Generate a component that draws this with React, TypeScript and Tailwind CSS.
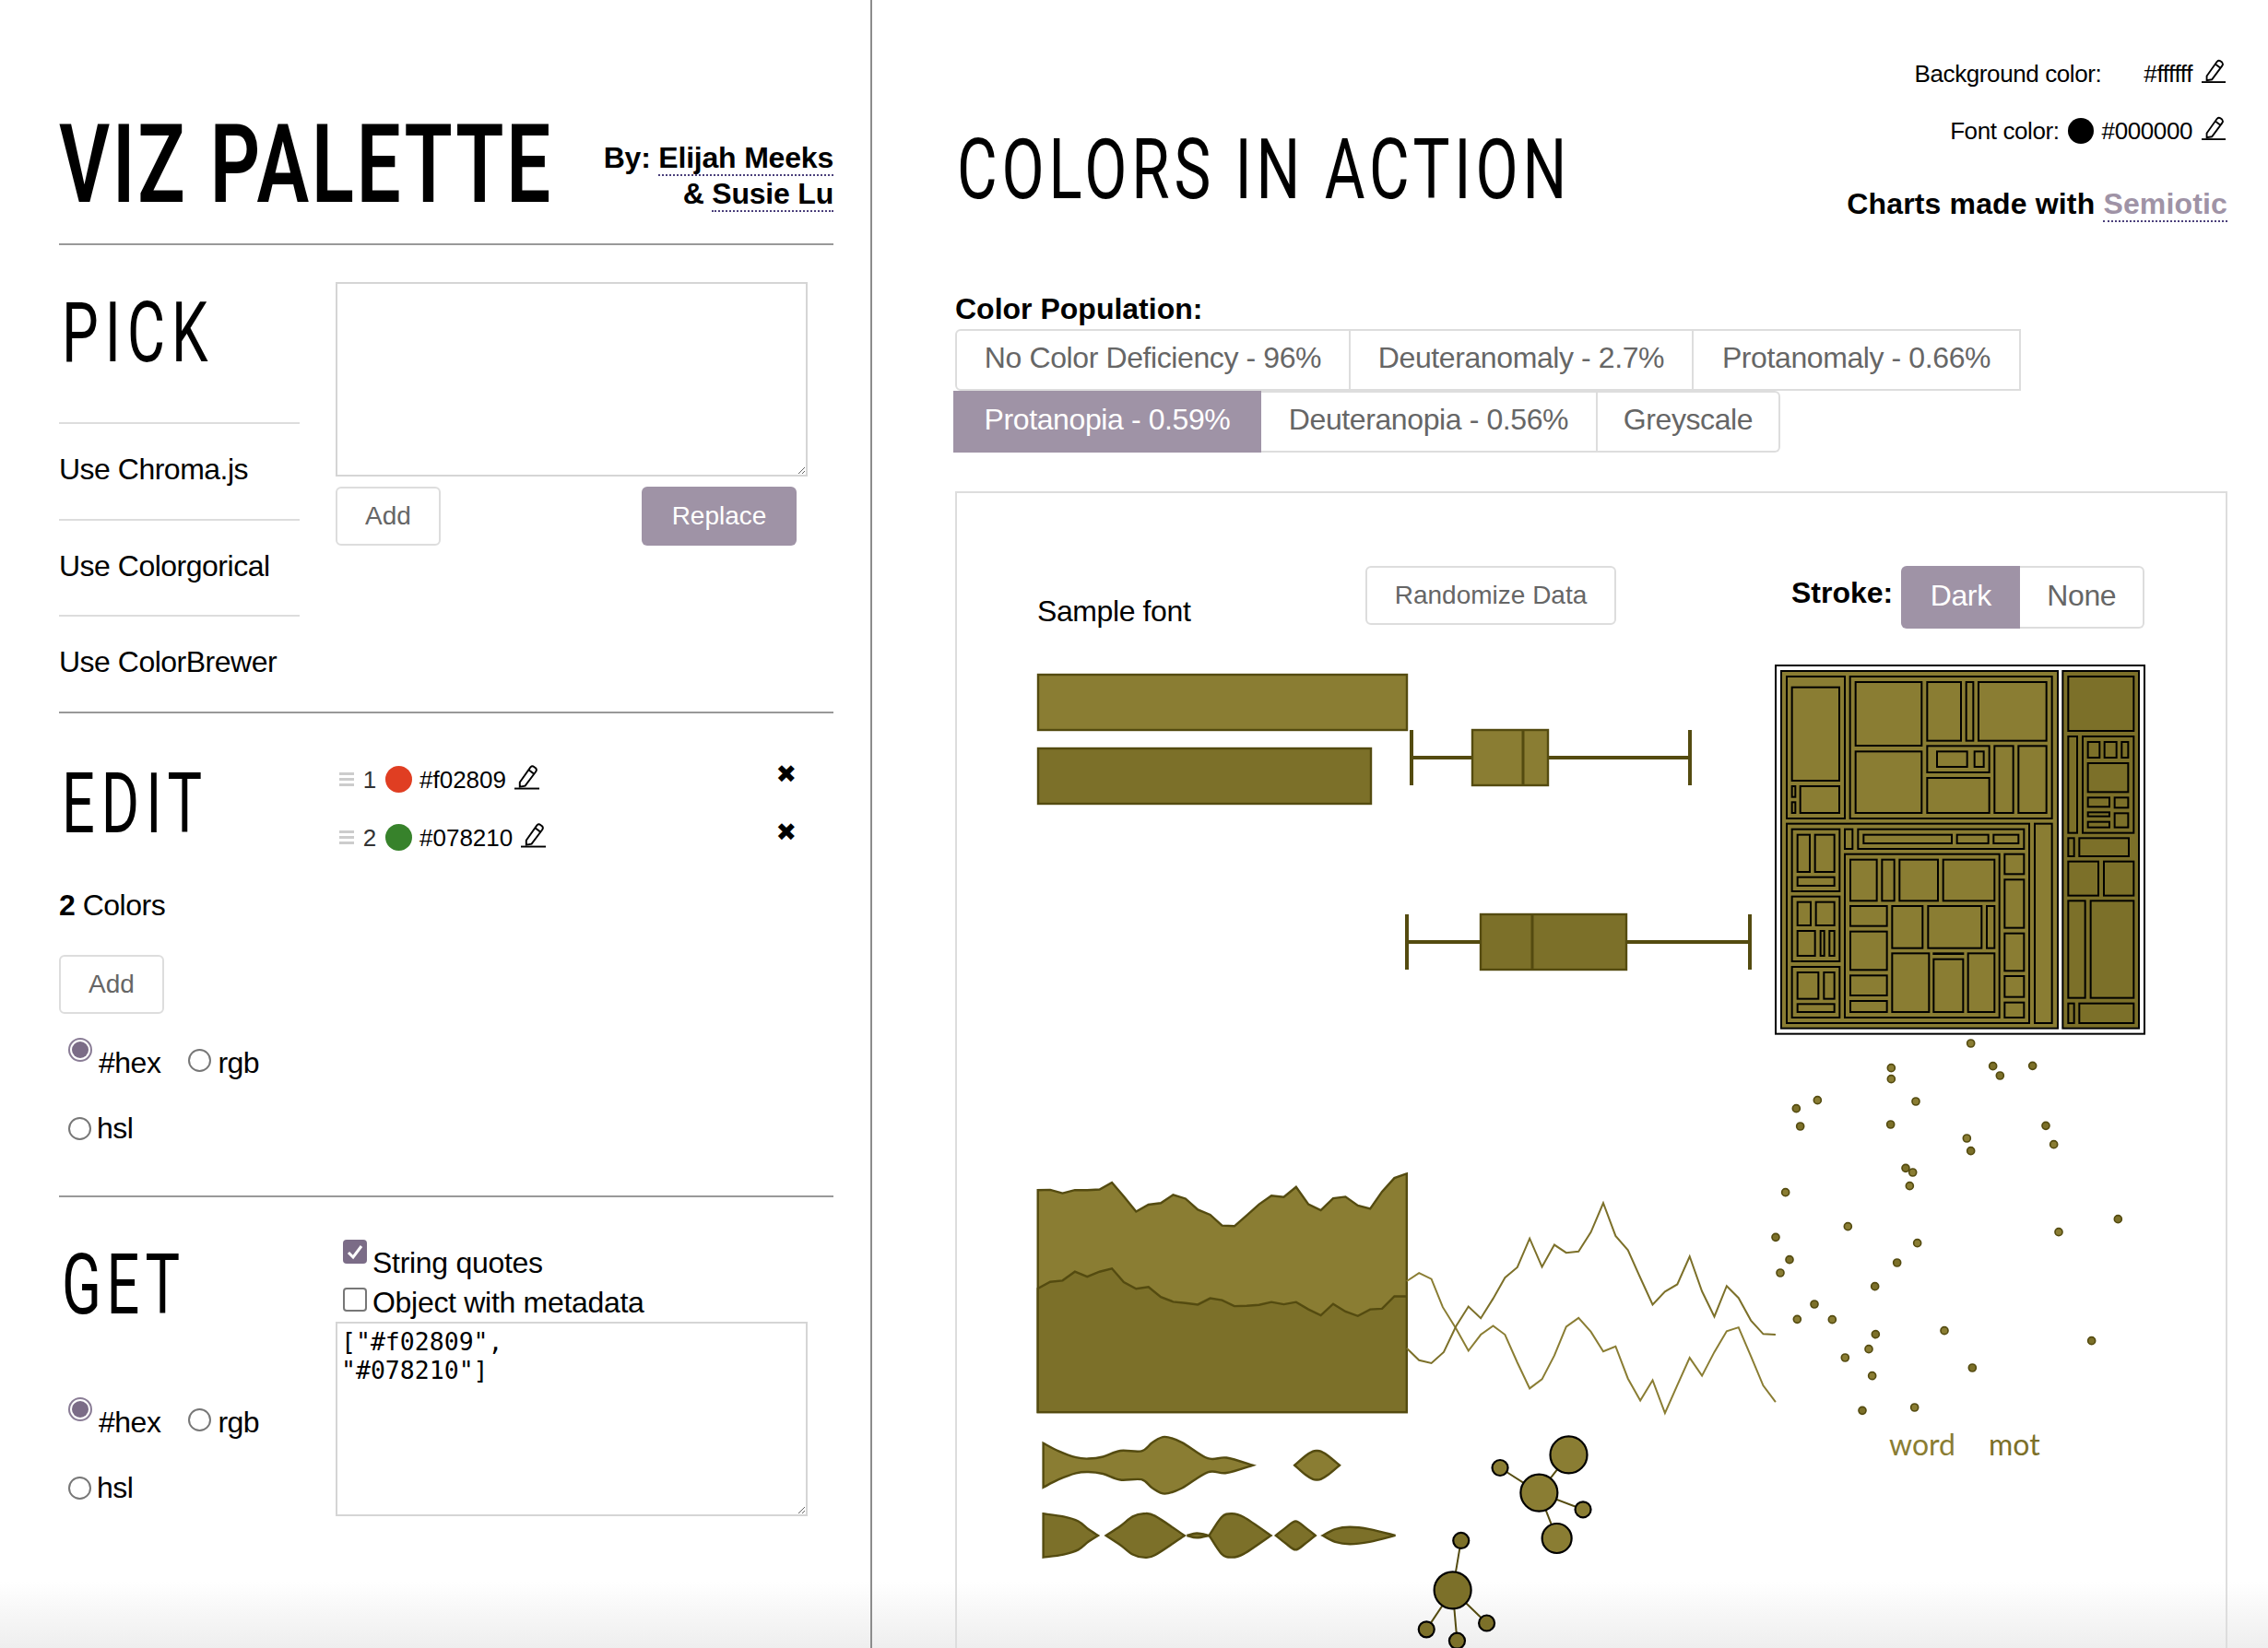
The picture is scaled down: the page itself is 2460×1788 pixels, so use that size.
const FILL1 = "#8a7d33";
const FILL2 = "#7c7029";
const DARK = "#544b10";

// treemap boxes, read off at 3x then scaled down by the group transform
const treeA = [
  [114, 102, 303, 564], [131, 137, 285, 441], [131, 459, 142, 494], [131, 511, 142, 546], [158, 459, 285, 546],
  [320, 102, 977, 564], [338, 120, 553, 327], [338, 346, 553, 546], [571, 120, 681, 311], [698, 120, 721, 311],
  [738, 120, 959, 311], [571, 328, 773, 414], [603, 346, 701, 396], [725, 346, 755, 396], [571, 432, 773, 546],
  [790, 328, 851, 546], [868, 328, 959, 546],
  [114, 581, 903, 1230], [131, 599, 286, 801], [149, 617, 189, 738], [206, 617, 269, 738], [149, 755, 269, 783],
  [131, 818, 286, 1029], [149, 836, 192, 912], [209, 836, 269, 912], [149, 930, 206, 1011], [224, 930, 236, 1011],
  [253, 930, 269, 1011], [131, 1047, 286, 1212], [149, 1065, 217, 1151], [235, 1065, 269, 1151], [149, 1168, 269, 1194],
  [303, 599, 328, 663], [346, 599, 886, 663], [364, 617, 651, 645], [668, 617, 770, 645], [787, 617, 868, 645],
  [303, 680, 806, 1212], [321, 698, 407, 832], [424, 698, 464, 832], [481, 698, 606, 832], [623, 698, 790, 832],
  [321, 849, 440, 914], [457, 849, 556, 986], [574, 849, 748, 986], [765, 849, 790, 986], [321, 932, 440, 1057],
  [321, 1075, 440, 1140], [321, 1158, 440, 1194], [457, 1003, 577, 1194], [592, 1003, 688, 1005], [592, 1022, 688, 1194],
  [704, 1003, 790, 1194], [823, 680, 886, 745], [823, 763, 886, 920], [823, 938, 886, 1060], [823, 1077, 886, 1145],
  [823, 1163, 886, 1212], [921, 581, 977, 1230],
];
const treeB = [
  [1030, 102, 1243, 279], [1030, 297, 1059, 611], [1077, 297, 1243, 611], [1094, 315, 1132, 366], [1148, 315, 1187, 366],
  [1204, 315, 1225, 366], [1094, 384, 1225, 478], [1094, 496, 1164, 526], [1181, 496, 1225, 529], [1094, 544, 1164, 557],
  [1094, 575, 1164, 593], [1181, 547, 1225, 593], [1030, 628, 1049, 687], [1066, 628, 1227, 687], [1030, 704, 1128, 815],
  [1146, 704, 1243, 815], [1030, 832, 1085, 1148], [1103, 832, 1243, 1148], [1030, 1166, 1049, 1230], [1066, 1166, 1243, 1230],
];

const dots: [number, number, number][] = [
  [713, 36, 1], [454, 116, 1], [454, 152, 1], [785, 110, 2], [808, 141, 2], [914, 109, 2], [214, 221, 1], [145, 248, 2],
  [158, 306, 2], [534, 225, 1], [452, 300, 2], [957, 304, 2], [983, 365, 1], [700, 345, 1], [713, 386, 2], [501, 442, 2],
  [524, 456, 1], [514, 500, 1], [110, 521, 1], [313, 632, 1], [78, 667, 2], [539, 686, 1], [473, 750, 2], [123, 740, 2],
  [93, 783, 1], [401, 827, 2], [204, 885, 2], [148, 934, 1], [262, 935, 1], [403, 983, 2], [381, 1031, 1], [304, 1059, 1],
  [392, 1118, 1], [360, 1231, 2], [530, 1221, 1], [627, 971, 1], [718, 1092, 2], [1106, 1004, 2], [999, 650, 1], [1192, 608, 2],
];

const areaTop = "48,120 73,119 98,130 123,120 148,120 173,118 198,96 222,140 247,188 272,166 297,161 322,135 347,147 372,182 397,198 421,232 446,234 471,200 496,165 521,138 546,142 571,110 596,165 621,184 646,146 671,141 696,169 721,179 745,125 770,82 795,68";
const areaLow = "48,431 73,410 98,406 123,378 148,394 173,378 198,368 222,411 247,432 272,426 297,458 322,473 347,477 372,482 397,462 421,468 446,487 471,486 496,483 521,474 546,481 571,474 596,497 621,516 646,480 671,504 696,518 721,497 745,495 770,456 795,456";
const lineA = "795,408 820,382 845,401 868,490 895,558 920,628 945,577 970,549 994,577 1019,665 1044,747 1069,718 1094,643 1118,552 1143,524 1168,568 1193,630 1218,614 1243,716 1268,785 1293,721 1318,825 1343,737 1368,650 1393,707 1418,632 1443,566 1467,554 1492,645 1517,738 1542,790";
const lineB = "795,620 820,658 845,667 870,632 895,550 920,488 945,525 970,463 994,397 1019,364 1044,273 1069,363 1094,293 1118,318 1143,314 1168,253 1193,161 1218,265 1243,310 1268,397 1293,482 1318,441 1343,418 1368,330 1393,440 1418,520 1443,423 1467,461 1492,532 1517,575 1542,577";

// one smooth edge through points, offset from the centre line by sign * height
function edge(points: [number, number][], cy: number, sign: number) {
  let d = "";
  const py = (i: number) => cy + sign * points[i][1];
  for (let i = 1; i < points.length; i++) {
    const a = Math.max(i - 2, 0);
    const b = Math.min(i + 1, points.length - 1);
    const c1x = points[i - 1][0] + (points[i][0] - points[a][0]) / 6;
    const c1y = py(i - 1) + (py(i) - py(a)) / 6;
    const c2x = points[i][0] - (points[b][0] - points[i - 1][0]) / 6;
    const c2y = py(i) - (py(b) - py(i - 1)) / 6;
    d += ` C${c1x},${c1y} ${c2x},${c2y} ${points[i][0]},${py(i)}`;
  }
  return d;
}

// mirrored violin outline around a centre line
function violin(points: [number, number][], cy: number) {
  const back = [...points].reverse();
  return `M${points[0][0]},${cy - points[0][1]}${edge(points, cy, -1)} L${back[0][0]},${cy + back[0][1]}${edge(back, cy, 1)} Z`;
}

const nx = (v: number) => 1100 + v / 1.867;
const ny = (v: number) => 1250 + v / 2.914;

function Network({ nodes, fill }: { nodes: [number, number, number][]; fill: string }) {
  const [hub, ...rest] = nodes;
  return (
    <g>
      {rest.map((n, i) => (
        <line key={i} x1={nx(hub[0])} y1={ny(hub[1])} x2={nx(n[0])} y2={ny(n[1])} stroke={DARK} strokeWidth={2} />
      ))}
      {nodes.map((n, i) => (
        <circle key={i} cx={nx(n[0])} cy={ny(n[1])} r={n[2]} fill={fill} stroke="#000" strokeWidth={2.2} />
      ))}
    </g>
  );
}

function Box({ x0, x1, b0, b1, med, y, fill }: { x0: number; x1: number; b0: number; b1: number; med: number; y: number; fill: string }) {
  return (
    <g stroke={DARK}>
      <line x1={x0} x2={x1} y1={y} y2={y} strokeWidth={4} />
      <line x1={x0} x2={x0} y1={y - 30} y2={y + 30} strokeWidth={4} />
      <line x1={x1} x2={x1} y1={y - 30} y2={y + 30} strokeWidth={4} />
      <rect x={b0} y={y - 30} width={b1 - b0} height={60} fill={fill} strokeWidth={2.4} />
      <line x1={med} x2={med} y1={y - 30} y2={y + 30} strokeWidth={3} />
    </g>
  );
}

const smallViolins: [number, number][][] = [
  [[59, 69], [100, 60], [130, 45], [150, 20], [170, 0]],
  [[186, 0], [215, 30], [240, 60], [262, 69], [285, 62], [345, 0]],
  [[350, 0], [370, 7], [395, 0]],
  [[395, 0], [420, 58], [440, 69], [465, 58], [520, 0]],
  [[530, 0], [550, 25], [570, 45], [590, 25], [610, 0]],
  [[625, 0], [650, 20], [680, 27], [720, 20], [772, 0]],
];

function Charts() {
  return (
    <svg width={1379} height={1255} className="absolute left-0 top-0">
      <g transform="translate(-1038,-535)">
        <rect x={1126} y={732} width={400} height={60} fill={FILL1} stroke={DARK} strokeWidth={2.4} />
        <rect x={1126} y={812} width={361} height={60} fill={FILL2} stroke={DARK} strokeWidth={2.4} />
        <Box x0={1531} x1={1833} b0={1597} b1={1679} med={1652} y={822} fill={FILL1} />
        <Box x0={1526} x1={1898} b0={1606} b1={1764} med={1662} y={1022} fill={FILL2} />

        {/* treemap */}
        <g transform="translate(1900,700) scale(0.33333)" strokeWidth={6}>
          <rect x={78} y={66} width={1200} height={1199} fill="#fff" stroke="#000" />
          <rect x={96} y={84} width={900} height={1163} fill={FILL1} stroke="#000" />
          {treeA.map(([a, b, c, d], i) => (
            <rect key={i} x={a} y={b} width={c - a} height={d - b} fill={FILL1} stroke="#000" />
          ))}
          <rect x={1012} y={84} width={248} height={1163} fill={FILL2} stroke="#000" />
          {treeB.map(([a, b, c, d], i) => (
            <rect key={i} x={a} y={b} width={c - a} height={d - b} fill={FILL2} stroke="#000" />
          ))}
        </g>

        {/* scatter */}
        <g transform="translate(1900,1120) scale(0.33333)">
          {dots.map(([x, y, s], i) => (
            <circle key={i} cx={x} cy={y} r={12} fill={s === 1 ? FILL1 : FILL2} stroke={DARK} strokeWidth={5} />
          ))}
        </g>

        {/* area, lines, violins */}
        <g transform="translate(1100,1250) scale(0.5356,0.3432)">
          <polygon points={`48,822 ${areaTop} 795,822`} fill={FILL1} stroke={DARK} strokeWidth={2.4} vectorEffect="non-scaling-stroke" />
          <polygon points={`48,822 ${areaLow} 795,822`} fill={FILL2} stroke={DARK} strokeWidth={2.4} vectorEffect="non-scaling-stroke" />
          <polyline points={lineA} fill="none" stroke={FILL1} strokeWidth={2} vectorEffect="non-scaling-stroke" />
          <polyline points={lineB} fill="none" stroke={FILL2} strokeWidth={2} vectorEffect="non-scaling-stroke" />
          <path
            d={violin(
              [[59, 70], [90, 45], [125, 25], [150, 21], [180, 27], [215, 46], [258, 45], [280, 72], [305, 90], [340, 72], [392, 22], [430, 24], [483, 0]],
              990,
            )}
            fill={FILL1}
            stroke={DARK}
            strokeWidth={2.4}
            vectorEffect="non-scaling-stroke"
          />
          <path
            d={violin([[568, 0], [590, 30], [605, 44], [613, 46], [621, 44], [636, 30], [659, 0]], 990)}
            fill={FILL1}
            stroke={DARK}
            strokeWidth={2.4}
            vectorEffect="non-scaling-stroke"
          />
          {smallViolins.map((p, i) => (
            <path key={i} d={violin(p, 1212)} fill={FILL2} stroke={DARK} strokeWidth={2.4} vectorEffect="non-scaling-stroke" />
          ))}
        </g>

        <Network nodes={[[1063, 1077, 20], [1123, 957, 20], [1099, 1221, 16], [984, 998, 8.5], [1152, 1130, 8.5]]} fill={FILL1} />
        <Network nodes={[[888, 1385, 20], [905, 1228, 8.5], [835, 1509, 8.5], [897, 1545, 8.5], [957, 1489, 8.5]]} fill={FILL2} />

        <text x={2049} y={1579} fontSize={32} fontWeight={400} fontFamily="Lato, sans-serif" fill={FILL1}>word</text>
        <text x={2157} y={1579} fontSize={32} fontWeight={400} fontFamily="Lato, sans-serif" fill={FILL2}>mot</text>
      </g>
    </svg>
  );
}

function Pencil({ className }: { className?: string }) {
  return (
    <svg viewBox="0 0 28 28" className={className} fill="none" stroke="#000" strokeWidth={2}>
      <path d="M6 20 L18 3 Q20 1 22 2.5 L24 4 Q25.500 6 24 8 L12 24 L6 25 Z" />
      <path d="M16 6 L22 10.500" />
      <path d="M0 27 H28" />
    </svg>
  );
}

function Handle() {
  return (
    <span className="flex w-[16px] flex-col gap-[3px]">
      <span className="h-[3px] bg-[#ccc]" />
      <span className="h-[3px] bg-[#ccc]" />
      <span className="h-[3px] bg-[#ccc]" />
    </span>
  );
}

function Radio({ on }: { on?: boolean }) {
  if (on) {
    return (
      <span className="flex h-[26px] w-[26px] shrink-0 items-center justify-center rounded-full border-2 border-[#8a7d96] bg-white">
        <span className="h-[18px] w-[18px] rounded-full bg-[#7b6c87]" />
      </span>
    );
  }
  return <span className="block h-[25px] w-[25px] shrink-0 rounded-full border-2 border-[#777] bg-white" />;
}

function FormatRadios() {
  return (
    <div className="w-[260px] text-[32px] leading-none tracking-[-0.5px]">
      <div className="flex h-[50px] items-start pl-[10px]">
        <Radio on />
        <span className="ml-[7px] mt-[11px]">#hex</span>
        <span className="ml-[30px] mt-[12px] block"><Radio /></span>
        <span className="ml-[7px] mt-[11px]">rgb</span>
      </div>
      <div className="mt-[35px] flex h-[26px] items-center pl-[10px]">
        <Radio />
        <span className="ml-[6px]">hsl</span>
      </div>
    </div>
  );
}

function Heading({ children, scale }: { children: string; scale: string }) {
  return (
    <h2
      className={`mt-[4px] h-[64px] origin-left whitespace-nowrap font-['Roboto',sans-serif] text-[90px] font-normal leading-[64px] ${scale}`}
    >
      {children}
    </h2>
  );
}

const outlineBtn = "rounded-[6px] border-2 border-[#ddd] text-[#666] text-[28px]";

function ColorRow({ n, color, hex }: { n: number; color: string; hex: string }) {
  return (
    <div className="flex h-[63px] items-center text-[26px] leading-none">
      <span className="ml-[4px]"><Handle /></span>
      <span className="ml-[8px] w-[18px] text-center text-[#333]">{n}</span>
      <span className="ml-[8px] h-[29px] w-[29px] rounded-full" style={{ backgroundColor: color }} />
      <span className="ml-[8px]">{hex}</span>
      <Pencil className="ml-[9px] h-[28px] w-[27px] -translate-y-[3px]" />
      <span className="ml-auto mr-[12px] -translate-y-[6px] font-['DejaVu_Sans',sans-serif] text-[27px] leading-none">✖</span>
    </div>
  );
}

function SegButton({ label, width, active, rounded }: { label: string; width: string; active?: boolean; rounded?: string }) {
  return (
    <span
      className={`flex items-center justify-center whitespace-nowrap pb-[6px] ${width} ${rounded ?? ""} ${
        active ? "bg-[#9f93a6] text-white" : "border-y-2 border-r-2 border-[#ddd] text-[#666]"
      }`}
    >
      {label}
    </span>
  );
}

export default function App() {
  return (
    <div className="relative flex h-[1788px] w-[2460px] overflow-hidden bg-white font-['Liberation_Sans',sans-serif] text-black">
      {/* Bottom fade behind the page */}
      <div className="absolute inset-x-0 bottom-0 h-[72px] bg-gradient-to-b from-transparent to-[#eeeeee]" />

      {/* Left column */}
      <aside className="relative w-[946px] shrink-0 border-r-2 border-[#8c8c8c] pl-[64px] pr-[40px]">
        <header className="flex h-[266px] items-start justify-between border-b-2 border-[#999]">
          <h1 className="mt-[122px] h-[114px] w-[534px] shrink-0 origin-left scale-x-[0.72] whitespace-nowrap font-['Roboto',sans-serif] text-[118px] font-semibold leading-[114px] tracking-[4px]">
            VIZ PALETTE
          </h1>
          <p className="mt-[152px] whitespace-nowrap text-right text-[32px] font-bold leading-[39px] tracking-[-0.2px]">
            By: <span className="border-b-2 border-dotted border-[#4a3f7a]">Elijah Meeks</span>
            <br />
            &amp; <span className="border-b-2 border-dotted border-[#4a3f7a]">Susie Lu</span>
          </p>
        </header>

        {/* Pick */}
        <section className="flex h-[508px] border-b-2 border-[#999]">
          <div className="w-[261px]">
            <div className="ml-[3px] mt-[64px]"><Heading scale="scale-x-[0.7] tracking-[10px]">PICK</Heading></div>
            <ul className="mt-[64px] text-[32px] leading-none tracking-[-0.5px]">
              {["Use Chroma.js", "Use Colorgorical", "Use ColorBrewer"].map((t) => (
                <li key={t} className="flex h-[104.500px] items-center border-t-2 border-[#ddd] pb-[4px]">{t}</li>
              ))}
            </ul>
          </div>
          <div className="ml-[39px] mt-[40px] w-[512px]">
            <textarea readOnly className="block h-[211px] w-[512px] border-2 border-[#d5d5d5] bg-white outline-none" />
            <div className="mt-[11px] flex justify-between pr-[12px]">
              <button className={`h-[64px] w-[114px] bg-white ${outlineBtn}`}>Add</button>
              <button className="h-[64px] w-[168px] rounded-[6px] bg-[#9f93a6] text-[28px] text-white">Replace</button>
            </div>
          </div>
        </section>

        {/* Edit */}
        <section className="h-[525px] border-b-2 border-[#999]">
          <div className="flex">
            <div className="ml-[3px] mt-[63px] w-[297px]"><Heading scale="scale-x-[0.7] tracking-[10px]">EDIT</Heading></div>
            <div className="mt-[40px] w-[512px]">
              <ColorRow n={1} color="#e03e22" hex="#f02809" />
              <ColorRow n={2} color="#37822b" hex="#078210" />
            </div>
          </div>
          <p className="mt-[26px] text-[32px] leading-none tracking-[-0.5px]"><b>2</b> Colors</p>
          <button className={`mt-[38px] block h-[64px] w-[114px] bg-white ${outlineBtn}`}>Add</button>
          <div className="mt-[26px]"><FormatRadios /></div>
        </section>

        {/* Get */}
        <section className="flex">
          <div className="w-[300px]">
            <div className="ml-[3px] mt-[64px]"><Heading scale="scale-x-[0.7] tracking-[8px]">GET</Heading></div>
            <div className="mt-[89px]"><FormatRadios /></div>
          </div>
          <div className="mt-[46px] w-[512px]">
            <div className="flex h-[52px] items-start pl-[8px] text-[32px] leading-none tracking-[-0.3px]">
              <span className="flex h-[26px] w-[26px] items-center justify-center rounded-[4px] bg-[#7b6c87]">
                <svg viewBox="0 0 20 20" className="h-[20px] w-[20px]" fill="none" stroke="#fff" strokeWidth={3}>
                  <path d="M3 11 L8 16 L17 4" />
                </svg>
              </span>
              <span className="ml-[6px] mt-[9px]">String quotes</span>
            </div>
            <div className="flex h-[37px] items-start pl-[8px] text-[32px] leading-none tracking-[-0.3px]">
              <span className="h-[26px] w-[26px] rounded-[4px] border-2 border-[#777]" />
              <span className="ml-[6px]">Object with metadata</span>
            </div>
            <textarea
              readOnly
              defaultValue={'["#f02809",\n"#078210"]'}
              className="block h-[211px] w-[512px] border-2 border-[#d5d5d5] bg-white px-[4px] py-[4px] font-['DejaVu_Sans_Mono',monospace] text-[26.500px] leading-[31px] outline-none"
            />
          </div>
        </section>
      </aside>

      {/* Right column */}
      <main className="relative flex-1 pl-[90px] pr-[44px]">
        <div className="flex h-[317px] items-start justify-between">
          <h1 className="ml-[2px] mt-[153px] h-[64px] w-[656px] shrink-0 origin-left scale-x-[0.745] whitespace-nowrap font-['Roboto',sans-serif] text-[90px] font-normal leading-[64px] tracking-[6.500px]">
            COLORS IN ACTION
          </h1>
          <div className="flex flex-col items-end">
            <div className="mr-[2px] mt-[62px] flex h-[36px] items-center text-[26px] leading-none tracking-[-0.4px]">
              <span>Background color:</span>
              <span className="ml-[46px]">#ffffff</span>
              <Pencil className="ml-[10px] h-[28px] w-[26px] -translate-y-[3px]" />
            </div>
            <div className="mr-[2px] mt-[26px] flex h-[36px] items-center text-[26px] leading-none tracking-[-0.4px]">
              <span>Font color:</span>
              <span className="ml-[9px] h-[28px] w-[28px] rounded-full bg-black" />
              <span className="ml-[9px]">#000000</span>
              <Pencil className="ml-[10px] h-[28px] w-[26px] -translate-y-[3px]" />
            </div>
            <p className="mt-[43px] whitespace-nowrap text-[32px] font-bold leading-[36px] tracking-[0.15px]">
              Charts made with <span className="border-b-2 border-dotted border-[#4a3f7a] text-[#9f93a6]">Semiotic</span>
            </p>
          </div>
        </div>

        <p className="text-[32px] font-bold leading-[36px]">Color Population:</p>
        <div className="mt-[4px] flex h-[67px] text-[32px] tracking-[-0.4px]">
          <span className="flex w-[429px] items-center justify-center whitespace-nowrap rounded-l-[6px] border-2 border-[#ddd] pb-[6px] text-[#666]">No Color Deficiency - 96%</span>
          <SegButton label="Deuteranomaly - 2.7%" width="w-[372px]" />
          <SegButton label="Protanomaly - 0.66%" width="w-[355px]" />
        </div>
        <div className="-ml-[2px] flex h-[67px] text-[32px] tracking-[-0.4px]">
          <SegButton label="Protanopia - 0.59%" width="w-[334px]" active />
          <SegButton label="Deuteranopia - 0.56%" width="w-[365px]" />
          <SegButton label="Greyscale" width="w-[198px]" rounded="rounded-r-[6px]" />
        </div>

        <div className="relative mt-[42px] h-[1300px] border-2 border-[#ddd]">
          <Charts />
          <div className="relative flex items-start pl-[87px] pt-[79px]">
            <span className="mt-[31px] w-[356px] shrink-0 whitespace-nowrap text-[32px] leading-[36px] tracking-[-0.4px]">Sample font</span>
            <button className={`h-[64px] w-[272px] shrink-0 ${outlineBtn}`}>Randomize Data</button>
            <b className="ml-[190px] mt-[11px] text-[32px] leading-[36px]">Stroke:</b>
            <div className="ml-[9px] flex h-[68px] text-[32px] tracking-[-0.4px]">
              <span className="flex w-[129px] items-center justify-center rounded-l-[6px] bg-[#9f93a6] pb-[5px] text-white">Dark</span>
              <span className="flex w-[135px] items-center justify-center rounded-r-[6px] border-y-2 border-r-2 border-[#ddd] pb-[5px] text-[#666]">None</span>
            </div>
          </div>
        </div>
      </main>
    </div>
  );
}
